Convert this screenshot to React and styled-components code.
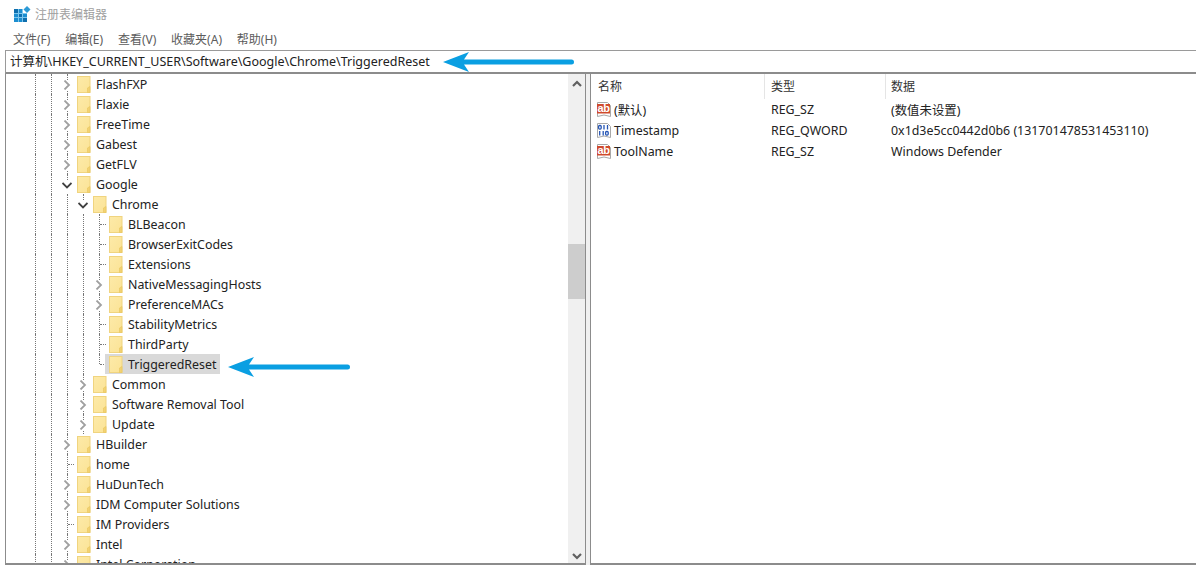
import React from 'react';
import styled, { createGlobalStyle } from 'styled-components';

const Global = createGlobalStyle`
  html, body { margin: 0; padding: 0; background: #fff; }
  body { font-family: "Noto Sans", "Noto Sans CJK SC", sans-serif; }
`;

const Page = styled.div`
  position: relative;
  width: 1196px;
  height: 565px;
  overflow: hidden;
  background: #fff;
  display: flex;
  flex-direction: column;
  color: #222;
  font-family: "Noto Sans", "Noto Sans CJK SC", sans-serif;
  font-size: 12.4px;
`;
const TitleBar = styled.div`
  height: 28px;
  display: flex;
  align-items: center;
  gap: 4px;
  padding-left: 13px;
  color: #a0a0a0;
  font-size: 12px;
`;
const MenuBar = styled.div`
  height: 22px;
  display: flex;
  align-items: center;
  gap: 14.8px;
  padding-left: 13px;
  color: #5c5c5c;
  font-size: 12px;
`;
const MenuItem = styled.span`
  white-space: nowrap;
`;
const AddressBar = styled.div`
  margin-left: 5px;
  border: 1px solid #9a9a9a;
  border-right: none;
  border-bottom: 2px solid #8c8c8c;
  display: flex;
  align-items: center;
  padding-left: 4px;
  padding-bottom: 2px;
  box-sizing: content-box;
  height: 19px;
  font-size: 12.5px;
  color: #222;
  white-space: nowrap;
`;
const Panes = styled.div`
  flex: 1;
  min-height: 0;
  margin-left: 5px;
  display: flex;
`;
const TreePane = styled.div`
  width: 579px;
  border-left: 1px solid #8c8c8c;
  border-right: 1px solid #8c8c8c;
  border-bottom: 2px solid #8c8c8c;
  display: flex;
  background: #fff;
  min-height: 0;
`;
const TreeList = styled.div`
  flex: 1;
  overflow: hidden;
  padding-left: 21px;
`;
const Row = styled.div`
  height: 20px;
  display: flex;
  align-items: stretch;
`;
const Cell = styled.div`
  position: relative;
  width: 16px;
  flex: none;
  &::before {
    content: '';
    display: ${p => (p.$v ? 'block' : 'none')};
    position: absolute;
    left: 8px;
    top: 0;
    height: ${p => (p.$v === 'half' ? '10px' : '20px')};
    border-left: 1px dotted #777;
  }
  &::after {
    content: '';
    display: ${p => (p.$h ? 'block' : 'none')};
    position: absolute;
    left: 9px;
    top: 10px;
    width: 6px;
    border-top: 1px dotted #777;
  }
`;
const Chevron = styled.svg`
  position: absolute;
  left: 3px;
  top: 6px;
  background: #fff;
`;
const Label = styled.div`
  display: flex;
  align-items: center;
  margin-left: -2px;
  padding: 0 4px;
  background: ${p => (p.$selected ? '#d9d9d9' : 'transparent')};
  position: relative;
  white-space: nowrap;
  gap: 5px;
  height: 20px;
  color: #222;
`;
const Scrollbar = styled.div`
  width: 17px;
  flex: none;
  background: #f0f0f0;
  display: flex;
  flex-direction: column;
  align-items: center;
  justify-content: space-between;
  position: relative;
  padding: 6px 0 3px;
  box-sizing: border-box;
`;
const Thumb = styled.div`
  position: absolute;
  left: 0;
  right: 0;
  top: 170px;
  height: 55px;
  background: #cdcdcd;
`;
const Splitter = styled.div`
  width: 4px;
  flex: none;
  background: #f0f0f0;
`;
const ListPane = styled.div`
  flex: 1;
  border-left: 1px solid #8c8c8c;
  border-bottom: 2px solid #8c8c8c;
  min-width: 0;
`;
const Header = styled.div`
  height: 25px;
  display: flex;
  color: #333;
  font-size: 12px;
`;
const HeadCell = styled.div`
  box-sizing: border-box;
  width: ${p => p.$w}px;
  padding-left: ${p => p.$pad}px;
  padding-bottom: 2px;
  display: flex;
  align-items: center;
  border-right: ${p => (p.$last ? 'none' : '1px solid #e5e5e5')};
`;
const ValueRow = styled.div`
  height: 21px;
  display: flex;
  align-items: center;
`;
const ValueName = styled.div`
  width: 180px;
  box-sizing: border-box;
  padding-left: 5px;
  display: flex;
  align-items: center;
  gap: 2px;
`;
const ValueType = styled.div`
  width: 120px;
`;
const ValueData = styled.div`
  white-space: nowrap;
`;
const Arrow = styled.svg`
  position: absolute;
  left: ${p => p.$x}px;
  top: ${p => p.$y}px;
`;

const Logo = () => (
  <svg width="17" height="16" viewBox="0 0 17 16" style={{ marginLeft: 1, flex: 'none' }}>
    <rect x="0" y="3" width="13" height="13" fill="#1c8ed0" />
    <path d="M0 7.5 H13 M0 11.5 H13 M4.5 3 V16 M8.5 3 V16" stroke="#7cc6ee" strokeWidth="1" />
    <rect x="9" y="3" width="4" height="4" fill="#fff" />
    <rect x="0" y="3" width="4" height="4" fill="#0f6fae" />
    <rect x="5" y="8" width="3" height="3" fill="#0f6fae" />
    <rect x="9" y="12" width="4" height="4" fill="#0f6fae" />
    <path d="M13 0 L16.5 3.5 L13 7 L9.5 3.5 Z" fill="#2c9ad6" />
  </svg>
);

const Folder = () => (
  <svg width="14" height="17" viewBox="0 0 14 17" style={{ flex: 'none' }}>
    <defs>
      <linearGradient id="fg" x1="0" y1="0" x2="1" y2="1">
        <stop offset="0" stopColor="#fdeaa8" />
        <stop offset="1" stopColor="#fbe396" />
      </linearGradient>
    </defs>
    <rect x="0.5" y="0.5" width="12.5" height="16" fill="url(#fg)" stroke="#f0d47f" />
    <path d="M10.5 16.5 V12 L13 10.5 V16.5 Z" fill="#f3d272" stroke="#e8c65e" strokeWidth="0.6" />
  </svg>
);

const ChevronRight = () => (
  <Chevron width="10" height="10" viewBox="0 0 10 10">
    <path d="M2.5 0.5 L7 5 L2.5 9.5" fill="none" stroke="#a0a0a0" strokeWidth="1.8" />
  </Chevron>
);
const ChevronDown = () => (
  <Chevron width="10" height="10" viewBox="0 0 10 10">
    <path d="M0.5 3 L5 7.5 L9.5 3" fill="none" stroke="#404040" strokeWidth="1.8" />
  </Chevron>
);

const StringIcon = () => (
  <svg width="16" height="17" viewBox="0 0 16 17" style={{ flex: 'none' }}>
    <path d="M1.5 1.5 H11.5 L14.5 4.5 V15.5 L8 14 L1.5 15.5 Z" fill="#fff" stroke="#a8a8a8" />
    <rect x="1" y="3" width="13" height="9.5" fill="#cf4a2c" />
    <text x="1.5" y="11" fontSize="11" fontWeight="700" letterSpacing="-0.4" fill="#fff" fontFamily="Liberation Sans, sans-serif">ab</text>
  </svg>
);
const BinaryIcon = () => (
  <svg width="16" height="17" viewBox="0 0 16 17" style={{ flex: 'none' }}>
    <path d="M1.5 1.5 H11.5 L14.5 4.5 V15.5 L8 14 L1.5 15.5 Z" fill="#fff" stroke="#a8a8a8" />
    <g fill="none" stroke="#2454b4" strokeWidth="1.3">
      <rect x="2.6" y="3.5" width="2.6" height="3.6" rx="1" />
      <path d="M8 3 V7.6 M11.5 3 V7.6" />
      <path d="M3.7 9 V13.6 M7.2 9 V13.6" />
      <rect x="9.6" y="9.5" width="2.6" height="3.6" rx="1" />
    </g>
  </svg>
);

const ArrowLeft = ({ x, y, length }) => (
  <Arrow $x={x} $y={y} width={length} height="20" viewBox={`0 0 ${length} 20`}>
    <path d={`M0 10 L26 0 L21 7.5 H${length - 2.5} a2.5 2.5 0 0 1 0 5 H21 L26 20 Z`} fill="#0a9fe2" />
  </Arrow>
);

// each cell: '|' line, 'T' tee, 'L' end, '>' collapsed, 'v' expanded
const g = ['|', '|'];
const rows = [
  [...g, '>', 'FlashFXP'],
  [...g, '>', 'Flaxie'],
  [...g, '>', 'FreeTime'],
  [...g, '>', 'Gabest'],
  [...g, '>', 'GetFLV'],
  [...g, 'v', 'Google'],
  [...g, '|', 'v', 'Chrome'],
  [...g, '|', '|', 'T', 'BLBeacon'],
  [...g, '|', '|', 'T', 'BrowserExitCodes'],
  [...g, '|', '|', 'T', 'Extensions'],
  [...g, '|', '|', '>', 'NativeMessagingHosts'],
  [...g, '|', '|', '>', 'PreferenceMACs'],
  [...g, '|', '|', 'T', 'StabilityMetrics'],
  [...g, '|', '|', 'T', 'ThirdParty'],
  [...g, '|', '|', 'L', 'TriggeredReset'],
  [...g, '|', '>', 'Common'],
  [...g, '|', '>', 'Software Removal Tool'],
  [...g, '|', '>', 'Update'],
  [...g, '>', 'HBuilder'],
  [...g, 'T', 'home'],
  [...g, '>', 'HuDunTech'],
  [...g, '>', 'IDM Computer Solutions'],
  [...g, 'T', 'IM Providers'],
  [...g, '>', 'Intel'],
  [...g, '>', 'Intel Corporation'],
];

const TreeCell = ({ kind }) => {
  if (kind === '|') return <Cell $v="full" />;
  if (kind === 'T') return <Cell $v="full" $h />;
  if (kind === 'L') return <Cell $v="half" $h />;
  if (kind === '>') return <Cell $v="full"><ChevronRight /></Cell>;
  return <Cell $v="half"><ChevronDown /></Cell>;
};

const ScrollArrow = ({ up }) => (
  <svg width="10" height="8" viewBox="0 0 10 8">
    <path d={up ? 'M1 6 L5 2 L9 6' : 'M1 2 L5 6 L9 2'} fill="none" stroke="#606060" strokeWidth="2.2" />
  </svg>
);

export default function App() {
  return (
    <Page>
      <Global />
      <TitleBar><Logo />注册表编辑器</TitleBar>
      <MenuBar>
        <MenuItem>文件(F)</MenuItem>
        <MenuItem>编辑(E)</MenuItem>
        <MenuItem>查看(V)</MenuItem>
        <MenuItem>收藏夹(A)</MenuItem>
        <MenuItem>帮助(H)</MenuItem>
      </MenuBar>
      <AddressBar>计算机\HKEY_CURRENT_USER\Software\Google\Chrome\TriggeredReset</AddressBar>
      <Panes>
        <TreePane>
          <TreeList>
            {rows.map((r, i) => {
              const name = r[r.length - 1];
              return (
                <Row key={i}>
                  {r.slice(0, -1).map((k, j) => <TreeCell key={j} kind={k} />)}
                  <Label $selected={name === 'TriggeredReset'}><Folder />{name}</Label>
                </Row>
              );
            })}
          </TreeList>
          <Scrollbar>
            <ScrollArrow up />
            <Thumb />
            <ScrollArrow />
          </Scrollbar>
        </TreePane>
        <Splitter />
        <ListPane>
          <Header>
            <HeadCell $w={174} $pad={7}>名称</HeadCell>
            <HeadCell $w={121} $pad={6}>类型</HeadCell>
            <HeadCell $w={300} $pad={5} $last>数据</HeadCell>
          </Header>
          <ValueRow>
            <ValueName><StringIcon />(默认)</ValueName>
            <ValueType>REG_SZ</ValueType>
            <ValueData>(数值未设置)</ValueData>
          </ValueRow>
          <ValueRow>
            <ValueName><BinaryIcon />Timestamp</ValueName>
            <ValueType>REG_QWORD</ValueType>
            <ValueData>0x1d3e5cc0442d0b6 (131701478531453110)</ValueData>
          </ValueRow>
          <ValueRow>
            <ValueName><StringIcon />ToolName</ValueName>
            <ValueType>REG_SZ</ValueType>
            <ValueData>Windows Defender</ValueData>
          </ValueRow>
        </ListPane>
      </Panes>
      <ArrowLeft x={443} y={52} length={131} />
      <ArrowLeft x={228} y={357} length={122} />
    </Page>
  );
}
